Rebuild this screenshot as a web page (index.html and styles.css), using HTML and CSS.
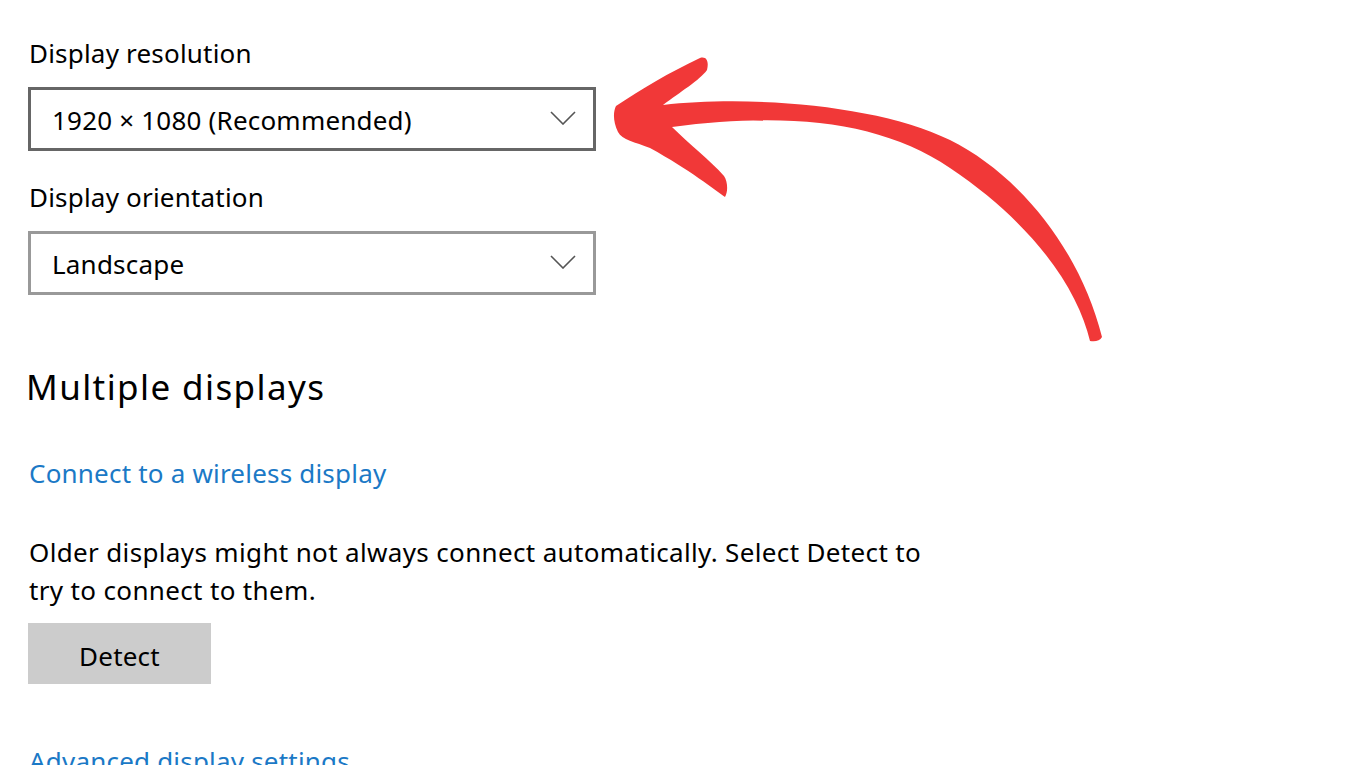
FILE: index.html
```html
<!DOCTYPE html>
<html lang="en">
<head>
<meta charset="utf-8">
<title>Display settings</title>
<link rel="stylesheet" href="styles.css">
</head>
<body>
<main class="page">
  <div class="label">Display resolution</div>
  <div class="select select--focus">
    <span class="select-text">1920 × 1080 (Recommended)</span>
    <svg class="chevron" width="26" height="14" viewBox="0 0 26 14"><polyline points="1,1 13,13 25,1" fill="none" stroke="#555" stroke-width="1.6"/></svg>
  </div>
  <div class="label label--gap">Display orientation</div>
  <div class="select">
    <span class="select-text">Landscape</span>
    <svg class="chevron" width="26" height="14" viewBox="0 0 26 14"><polyline points="1,1 13,13 25,1" fill="none" stroke="#555" stroke-width="1.6"/></svg>
  </div>
  <h2 class="heading">Multiple displays</h2>
  <a class="link link--wireless" href="#">Connect to a wireless display</a>
  <p class="desc">Older displays might not always connect automatically. Select Detect to try to connect to them.</p>
  <button class="btn" type="button">Detect</button>
  <a class="link link--advanced" href="#">Advanced display settings</a>
</main>
<svg class="arrow" width="1360" height="765" viewBox="0 0 1360 765">
  <path fill="#f13838" d="
    M 616 106
    C 640 90 670 72 700 58
    C 707 56 709 62 707 70
    C 700 80 680 92 663 105
    C 750 95 880 105 950 140
    C 1020 175 1080 250 1102 337
    C 1100 341 1095 342 1090 341
    C 1078 290 1035 225 950 168
    C 880 121 790 112 672 127
    C 690 145 710 160 724 176
    C 728 182 728 192 725 197
    C 715 190 690 170 650 148
    C 635 142 622 140 618 132
    C 613 122 613 112 616 106 Z"/>
</svg>
</body>
</html>
```

FILE: styles.css
```css
html, body {
  margin: 0;
  padding: 0;
  background: #ffffff;
}

body {
  font-family: "Noto Sans", "Open Sans", sans-serif;
  color: #000000;
  overflow: hidden;
  height: 765px;
}

.page {
  padding: 38px 0 0 28px;
  display: flex;
  flex-direction: column;
  align-items: flex-start;
}

.label {
  font-size: 26px;
  line-height: 30px;
  letter-spacing: 0.2px;
  padding-left: 1px;
}

.label--gap {
  margin-top: 31px;
}

.select {
  margin-top: 19px;
  box-sizing: border-box;
  width: 568px;
  height: 64px;
  border: 3px solid #999999;
  display: flex;
  align-items: center;
  justify-content: space-between;
  padding: 2px 17px 0 21px;
}

.select--focus {
  border-color: #666666;
}

.select-text {
  font-size: 26px;
  letter-spacing: 0.2px;
}

.chevron {
  display: block;
  margin-top: -4px;
}

.heading {
  margin: 72px 0 0 -2px;
  font-size: 35px;
  line-height: 40px;
  font-weight: 400;
  letter-spacing: 1.4px;
}

.link {
  display: block;
  font-size: 26px;
  line-height: 30px;
  letter-spacing: 0.2px;
  color: #1b79c6;
  text-decoration: none;
  padding-left: 1px;
}

.link--wireless {
  margin-top: 51px;
}

.desc {
  margin: 45px 0 0 0;
  width: 905px;
  font-size: 26px;
  line-height: 38px;
  letter-spacing: 0.35px;
  padding-left: 1px;
}

.btn {
  margin-top: 14px;
  width: 183px;
  height: 61px;
  border: none;
  background: #cccccc;
  font-family: inherit;
  font-size: 26px;
  letter-spacing: 0.2px;
  color: #000000;
  padding: 4px 0 0 0;
}

.link--advanced {
  margin-top: 62px;
}

.arrow {
  position: absolute;
  top: 0;
  left: 0;
  pointer-events: none;
}
```
